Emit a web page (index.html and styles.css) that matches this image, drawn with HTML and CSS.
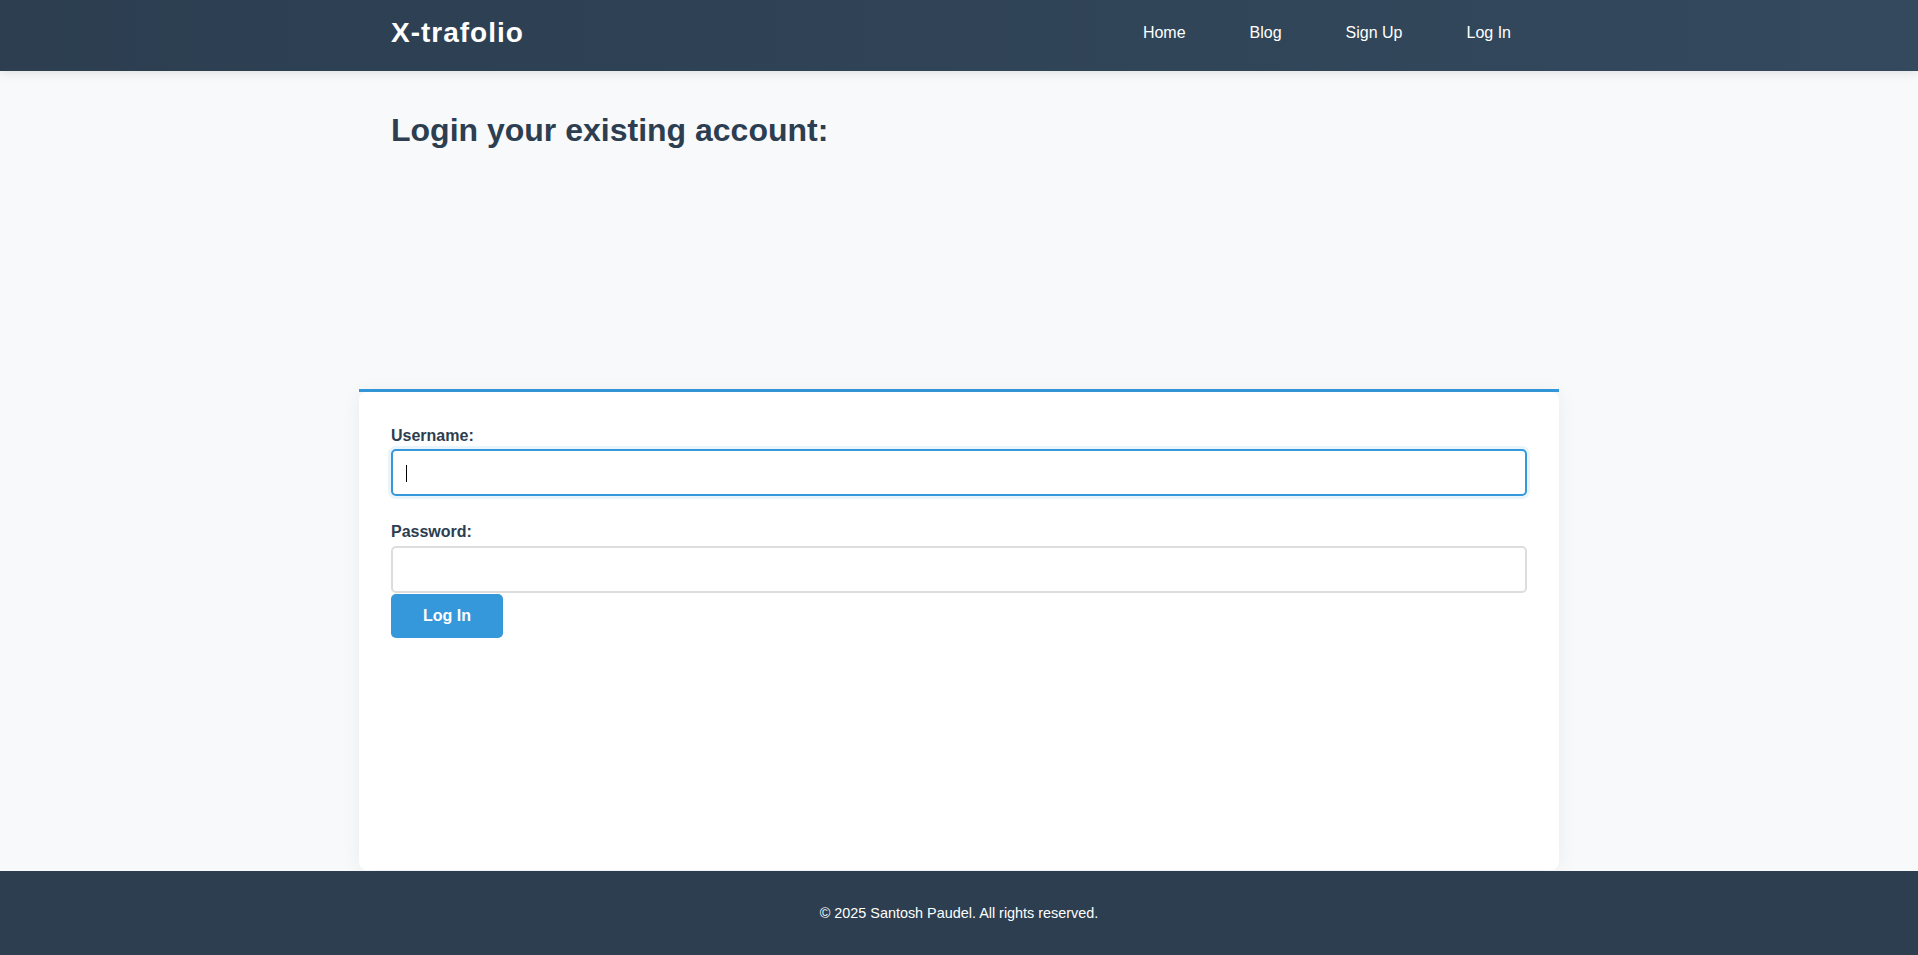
FILE: index.html
```html
<!DOCTYPE html>
<html lang="en">
<head>
<meta charset="utf-8">
<title>X-trafolio - Log In</title>
<link rel="stylesheet" href="styles.css">
</head>
<body>
<header class="site-header">
  <div class="header-inner">
    <a class="logo" href="#">X-trafolio</a>
    <nav class="main-nav">
      <a href="#">Home</a>
      <a href="#">Blog</a>
      <a href="#">Sign Up</a>
      <a href="#">Log In</a>
    </nav>
  </div>
</header>
<main class="page">
  <section class="intro">
    <h2 class="page-title">Login your existing account:</h2>
  </section>
  <div class="card-wrap">
    <form class="card" action="#" onsubmit="return false;">
      <div class="form-group">
        <label class="field-label" for="username">Username:</label>
        <div class="input-wrap">
          <input class="field-input is-focused" type="text" id="username" name="username">
          <span class="caret"></span>
        </div>
      </div>
      <div class="form-group last">
        <label class="field-label" for="password">Password:</label>
        <input class="field-input" type="password" id="password" name="password">
      </div>
      <button class="btn-primary" type="submit">Log In</button>
    </form>
  </div>
</main>
<footer class="site-footer">
  <p class="footer-text">© 2025 Santosh Paudel. All rights reserved.</p>
</footer>
</body>
</html>
```
FILE: styles.css
```css
* {
  box-sizing: border-box;
}

html, body {
  margin: 0;
  padding: 0;
}

body {
  font-family: "Liberation Sans", Arial, sans-serif;
  background: #f7f9fb;
  color: #2c3e50;
  min-height: 955px;
  display: flex;
  flex-direction: column;
}

.site-header {
  height: 71px;
  background: linear-gradient(90deg, #2c3e50 0%, #34495e 100%);
  box-shadow: 0 2px 10px rgba(0, 0, 0, 0.1);
  position: relative;
  z-index: 2;
}

.header-inner {
  max-width: 1200px;
  margin: 0 auto;
  padding: 0 32px;
  height: 66px;
  display: flex;
  align-items: center;
  justify-content: space-between;
}

.logo {
  color: #ffffff;
  text-decoration: none;
  font-weight: bold;
  font-size: 28px;
  letter-spacing: 1px;
  line-height: 32px;
}

.main-nav {
  display: flex;
  align-items: center;
}

.main-nav a {
  color: #ffffff;
  text-decoration: none;
  font-size: 16px;
  line-height: 18px;
  padding: 0 16px;
  margin-left: 32px;
}

.page {
  flex: 1;
  display: flex;
  flex-direction: column;
}

.intro {
  width: 1200px;
  margin: 0 auto;
  padding: 41px 32px 0;
}

.page-title {
  margin: 0;
  font-size: 32px;
  line-height: 37px;
  font-weight: bold;
  color: #2c3e50;
}

.card-wrap {
  width: 1200px;
  margin: 240px auto 1px;
  border-top: 3px solid #3498db;
  flex: 1;
  display: flex;
}

.card {
  flex: 1;
  background: #ffffff;
  border-radius: 8px;
  box-shadow: 0 0 20px rgba(0, 0, 0, 0.06);
  padding: 35px 32px 32px;
}

.form-group {
  margin-bottom: 27px;
}

.form-group.last {
  margin-bottom: 0;
}

.field-label {
  display: block;
  font-weight: bold;
  font-size: 16px;
  line-height: 18.4px;
  color: #2c3e50;
  margin-bottom: 4px;
}

.input-wrap {
  position: relative;
}

.field-input {
  display: block;
  width: 100%;
  height: 47px;
  padding: 0 12px;
  border: 2px solid #dddddd;
  border-radius: 5px;
  font-family: "Liberation Sans", Arial, sans-serif;
  font-size: 16px;
  color: #2c3e50;
  background: #ffffff;
  outline: none;
}

.field-input.is-focused,
.field-input:focus {
  border-color: #3498db;
  box-shadow: 0 0 0 3px rgba(52, 152, 219, 0.1);
}

.caret {
  position: absolute;
  left: 15px;
  top: 16px;
  width: 1px;
  height: 17px;
  background: #000000;
}

.btn-primary {
  display: block;
  height: 44px;
  margin-top: 1px;
  padding: 0 32px;
  border: none;
  border-radius: 5px;
  background: #3498db;
  color: #ffffff;
  font-family: "Liberation Sans", Arial, sans-serif;
  font-size: 16px;
  font-weight: bold;
  cursor: pointer;
}

.site-footer {
  height: 84px;
  background: #2c3e50;
  display: flex;
  align-items: center;
  justify-content: center;
}

.footer-text {
  margin: 0;
  color: #ffffff;
  font-size: 14.4px;
  line-height: 20px;
  text-align: center;
}
```
